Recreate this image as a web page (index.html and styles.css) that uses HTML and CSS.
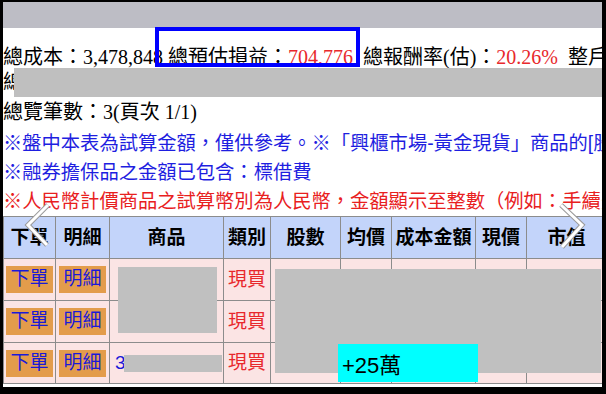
FILE: index.html
```html
<!DOCTYPE html>
<html lang="zh-Hant">
<head>
    <meta charset="UTF-8">
    <title>庫存損益</title>
    <link rel="stylesheet" href="styles.css">
</head>
<body>
    <div class="page">
        <div class="topbar"></div>

        <div class="summary">總成本：3,478,848 總預估損益：<span class="num-red">704,776</span>&nbsp; 總報酬率(估)：<span class="num-red">20.26%</span>&nbsp; 整戶維持率</div>

        <div class="masked">
            <span class="peek">總</span>
            <div class="mask"></div>
        </div>

        <div class="count">總覽筆數：3(頁次 1/1)</div>

        <div class="note note-blue note-first">※盤中本表為試算金額，僅供參考。<span class="note-part">※「興櫃市場-黃金現貨」商品的[股數]</span></div>
        <div class="note note-blue">※融券擔保品之金額已包含：標借費</div>
        <div class="note note-red">※人民幣計價商品之試算幣別為人民幣，金額顯示至整數（例如：手續費</div>

        <table class="holdings">
            <colgroup>
                <col style="width:52px">
                <col style="width:54px">
                <col style="width:114px">
                <col style="width:47px">
                <col style="width:70px">
                <col style="width:51px">
                <col style="width:84px">
                <col style="width:51px">
                <col style="width:80px">
            </colgroup>
            <thead>
                <tr>
                    <th>下單</th>
                    <th>明細</th>
                    <th>商品</th>
                    <th>類別</th>
                    <th>股數</th>
                    <th>均價</th>
                    <th>成本金額</th>
                    <th>現價</th>
                    <th>市值</th>
                </tr>
            </thead>
            <tbody>
                <tr>
                    <td><span class="btn">下單</span></td>
                    <td><span class="btn">明細</span></td>
                    <td></td>
                    <td class="kind">現買</td>
                    <td></td><td></td><td></td><td></td><td></td>
                </tr>
                <tr>
                    <td><span class="btn">下單</span></td>
                    <td><span class="btn">明細</span></td>
                    <td></td>
                    <td class="kind">現買</td>
                    <td></td><td></td><td></td><td></td><td></td>
                </tr>
                <tr>
                    <td><span class="btn">下單</span></td>
                    <td><span class="btn">明細</span></td>
                    <td class="product">3</td>
                    <td class="kind">現買</td>
                    <td></td><td></td><td></td><td></td><td></td>
                </tr>
            </tbody>
        </table>

        <!-- annotations drawn over the capture -->
        <div class="highlight"></div>
        <div class="redact redact-product"></div>
        <div class="redact redact-product-3"></div>
        <div class="redact redact-values"></div>
        <div class="tag">+25萬</div>

        <svg class="chevron chevron-left" width="30" height="52" viewBox="0 0 30 52">
            <polyline points="24,3 4,23 23,43" fill="none" stroke="#9a9a9a" stroke-width="5"/>
            <polyline points="24,3 4,23 23,43" fill="none" stroke="#fff" stroke-width="3"/>
        </svg>
        <svg class="chevron chevron-right" width="30" height="52" viewBox="0 0 30 52">
            <polyline points="5,3 26,23 6,45" fill="none" stroke="#9a9a9a" stroke-width="5"/>
            <polyline points="5,3 26,23 6,45" fill="none" stroke="#fff" stroke-width="3"/>
        </svg>
    </div>
</body>
</html>
```

FILE: styles.css
```css
/* Frame */
body {
    margin: 0;
    background-color: #000;
}

.page {
    position: relative;
    width: 599px;
    height: 385px;
    margin: 2px 0 0 3px;
    background-color: #fff;
    overflow: hidden;
    white-space: nowrap;
    font-family: 'Liberation Serif', 'Noto Sans CJK TC', serif;
    font-size: 20px;
    color: #000;
}

/* Summary lines */
.topbar {
    height: 26px;
    background-color: #bdbdc5;
}

.summary {
    height: 24px;
    padding-top: 16px;
    line-height: 26px;
}

.num-red {
    color: #e8282c;
}

.masked {
    display: flex;
    height: 29px;
    line-height: 29px;
}

.masked .peek {
    width: 11px;
    overflow: hidden;
}

.masked .mask {
    flex: 1;
    background-color: #bfbfbf;
}

.count {
    height: 30px;
    line-height: 30px;
}

/* Notes */
.note {
    height: 29px;
    line-height: 29px;
    font-family: 'Liberation Sans', 'Noto Sans CJK TC', sans-serif;
    font-size: 19.3px;
}

.note-first {
    height: 31px;
    line-height: 33px;
}

.note-blue {
    color: #1e1ee0;
}

.note-red {
    color: #e8201e;
}

/* Holdings table */
.holdings {
    width: 603px;
    table-layout: fixed;
    border-collapse: collapse;
    font-family: 'Liberation Sans', 'Noto Sans CJK TC', sans-serif;
    font-size: 19px;
}

.holdings th,
.holdings td {
    border: 1px solid #8c8c8c;
    padding: 0;
    text-align: center;
    line-height: 24px;
}

.holdings th {
    height: 41px;
    background-color: #c3d4fa;
    font-weight: bold;
}

.holdings td {
    height: 41px;
    background-color: #fbe4e4;
}

.holdings tbody tr:last-child td {
    height: 40px;
}

.btn {
    display: inline-block;
    padding: 1px 4px 2px;
    background-color: #e39c4b;
    color: #1a1ad8;
}

.kind {
    color: #e8282c;
}

.holdings .product {
    text-align: left;
    padding-left: 5px;
    color: #1a1ad8;
}

/* Overlays */
.highlight {
    position: absolute;
    left: 152px;
    top: 25px;
    width: 197px;
    height: 32px;
    border: 4px solid #0000ff;
}

.redact {
    position: absolute;
    background-color: #c0c0c0;
}

.redact-product {
    left: 115px;
    top: 265px;
    width: 99px;
    height: 66px;
}

.redact-product-3 {
    left: 121px;
    top: 353px;
    width: 98px;
    height: 17px;
}

.redact-values {
    left: 272px;
    top: 267px;
    width: 326px;
    height: 104px;
}

.tag {
    position: absolute;
    left: 335px;
    top: 342px;
    width: 136px;
    height: 38px;
    padding-left: 4px;
    background-color: #00ffff;
    font-family: 'Liberation Sans', 'Noto Sans CJK TC', sans-serif;
    font-size: 22px;
    line-height: 44px;
}

.chevron {
    position: absolute;
    top: 200px;
}

.chevron-left {
    left: 21px;
}

.chevron-right {
    left: 553px;
}
```
